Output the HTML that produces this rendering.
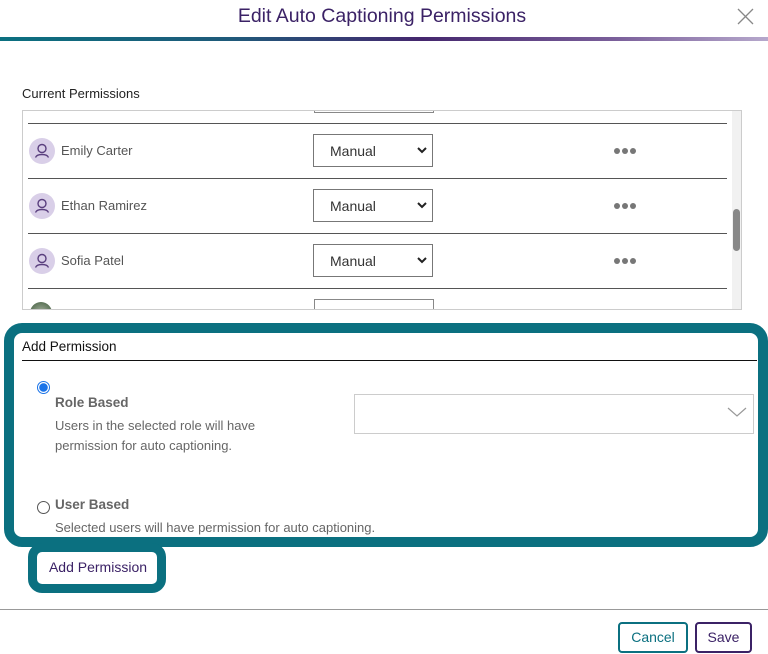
<!DOCTYPE html>
<html><head><style>
*{margin:0;padding:0;box-sizing:border-box}
body{width:768px;height:654px;position:relative;background:#fff;font-family:"Liberation Sans",sans-serif;overflow:hidden}
.a{position:absolute}
.title{left:0;width:764px;top:5px;text-align:center;font-size:19.5px;color:#3b2266}
.bar{left:0;top:37px;width:768px;height:4px;background:linear-gradient(90deg,#0b7080 0%,#1f5a7a 30%,#45276e 55%,#7a5f9a 80%,#b6a8cc 100%)}
.line{left:28px;width:699px;height:1px;background:#555}
.av{width:26px;height:26px;border-radius:50%;background:#d9cfe8;left:29px}
.nm{left:61px;font-size:13px;color:#555}
.sel{left:313px;width:120px;height:33px;border:1px solid #777;font-size:14px;color:#333;padding:8px 0 0 16px}
.dots{left:614px;font-size:0}
.dots i{display:inline-block;width:6px;height:6px;border-radius:50%;background:#777;margin-right:2px}
.desc{font-size:13px;color:#666;line-height:20px}
</style></head><body>
<div class="a title">Edit Auto Captioning Permissions</div>
<svg class="a" style="left:737px;top:8px" width="17" height="17"><path d="M1 1L16 16M16 1L1 16" stroke="#888" stroke-width="1.3"/></svg>
<div class="a bar"></div>
<div class="a" style="left:22px;top:86px;font-size:13px;color:#222">Current Permissions</div>
<div class="a" style="left:22px;top:110px;width:720px;height:200px;border:1px solid #ccc;overflow:hidden">
 <div class="a" style="left:291px;top:-2px;width:120px;height:4px;border:1px solid #888"></div>
 <div class="a" style="right:0;top:0;width:9px;height:198px;background:#f1f1f1"></div>
 <div class="a" style="right:1px;top:98px;width:7px;height:42px;border-radius:4px;background:#888"></div>
 <div class="a" style="left:291px;top:188px;width:120px;height:20px;border:1px solid #888"></div>
 <div class="a" style="left:7px;top:191px;width:22px;height:22px;border-radius:50%;background:radial-gradient(circle,#a8b2a0,#3d5a3a)"></div>
</div>
<div class="a line" style="top:123px"></div>
<div class="a line" style="top:178px"></div>
<div class="a line" style="top:233px"></div>
<div class="a line" style="top:288px"></div>

<div class="a av" style="top:138px"><svg width="26" height="26"><circle cx="13" cy="10.5" r="4" fill="none" stroke="#5a3f7e" stroke-width="1.4"/><path d="M6.5 19.5C8 15.5 18 15.5 19.5 19.5" fill="none" stroke="#5a3f7e" stroke-width="1.4"/></svg></div>
<div class="a nm" style="top:143px">Emily Carter</div>
<div class="a sel" style="top:134px">Manual</div>
<div class="a av" style="top:193px"><svg width="26" height="26"><circle cx="13" cy="10.5" r="4" fill="none" stroke="#5a3f7e" stroke-width="1.4"/><path d="M6.5 19.5C8 15.5 18 15.5 19.5 19.5" fill="none" stroke="#5a3f7e" stroke-width="1.4"/></svg></div>
<div class="a nm" style="top:198px">Ethan Ramirez</div>
<div class="a sel" style="top:189px">Manual</div>
<div class="a av" style="top:248px"><svg width="26" height="26"><circle cx="13" cy="10.5" r="4" fill="none" stroke="#5a3f7e" stroke-width="1.4"/><path d="M6.5 19.5C8 15.5 18 15.5 19.5 19.5" fill="none" stroke="#5a3f7e" stroke-width="1.4"/></svg></div>
<div class="a nm" style="top:253px">Sofia Patel</div>
<div class="a sel" style="top:244px">Manual</div>
<svg class="a" style="left:417px;top:147px" width="10" height="120"><path d="M1 1L5 5L9 1M1 56L5 60L9 56M1 111L5 115L9 111" fill="none" stroke="#222" stroke-width="2"/></svg>
<div class="a dots" style="top:148px"><i></i><i></i><i></i></div>
<div class="a dots" style="top:203px"><i></i><i></i><i></i></div>
<div class="a dots" style="top:258px"><i></i><i></i><i></i></div>

<div class="a" style="left:4px;top:323px;width:764px;height:224px;border:10px solid #0b7080;border-radius:18px"></div>
<div class="a" style="left:22px;top:339px;font-size:13.5px;color:#111">Add Permission</div>
<div class="a" style="left:22px;top:360px;width:735px;height:1px;background:#111"></div>
<div class="a" style="left:37px;top:381px;width:13px;height:13px;border-radius:50%;border:1px solid #1a73e8;background:radial-gradient(circle,#1a73e8 4px,#fff 4.5px)"></div>
<div class="a" style="left:55px;top:395px;font-size:13.5px;color:#666;font-weight:bold">Role Based</div>
<div class="a desc" style="left:55px;top:416px">Users in the selected role will have<br>permission for auto captioning.</div>
<div class="a" style="left:354px;top:394px;width:400px;height:40px;border:1px solid #ccc"></div>
<svg class="a" style="left:727px;top:407px" width="20" height="11"><path d="M1 1L10 9L19 1" fill="none" stroke="#999" stroke-width="1.2"/></svg>
<div class="a" style="left:37px;top:501px;width:13px;height:13px;border-radius:50%;border:1px solid #555"></div>
<div class="a" style="left:55px;top:497px;font-size:13.5px;color:#666;font-weight:bold">User Based</div>
<div class="a desc" style="left:55px;top:518px">Selected users will have permission for auto captioning.</div>

<div class="a" style="left:28px;top:543px;width:138px;height:50px;border:9px solid #0b7080;border-radius:14px;background:#fff"></div>
<div class="a" style="left:28px;top:559px;width:140px;text-align:center;font-size:14px;color:#3b2266">Add Permission</div>

<div class="a" style="left:0;top:609px;width:768px;height:1px;background:#999"></div>
<div class="a" style="left:618px;top:622px;width:70px;height:31px;border:2px solid #0b7080;border-radius:4px;color:#0b7080;font-size:14px;text-align:center;line-height:27px">Cancel</div>
<div class="a" style="left:695px;top:622px;width:57px;height:31px;border:2px solid #3b2266;border-radius:4px;color:#3b2266;font-size:14px;text-align:center;line-height:27px">Save</div>
</body></html>
